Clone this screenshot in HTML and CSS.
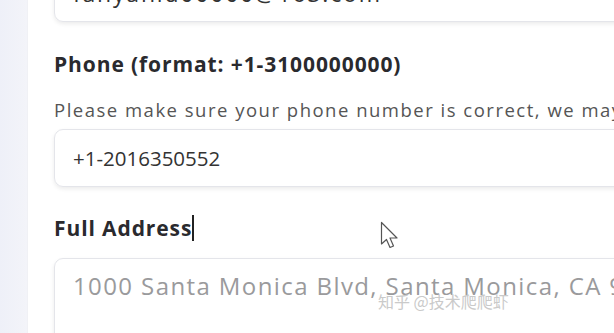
FILE: index.html
```html
<!DOCTYPE html>
<html>
<head>
<meta charset="utf-8">
<link rel="stylesheet" href="styles.css">
</head>
<body>
<div class="page">
  <div class="sidebar"></div>
  <main class="panel">
    <form class="form">
      <div class="input email">fanyanid00000@163.com</div>
      <div class="field">
        <label class="label">Phone (format: +1-3100000000)</label>
        <p class="help">Please make sure your phone number is correct, we may contact you</p>
        <div class="input">+1-2016350552</div>
      </div>
      <div class="field">
        <label class="label">Full Address<span class="caret"></span></label>
        <div class="input textarea placeholder">1000 Santa Monica Blvd, Santa Monica, CA 90401</div>
      </div>
    </form>
  </main>
</div>
<svg class="pointer" width="20" height="30" viewBox="0 0 20 30">
  <path d="M1.5 1.5 L1.5 23 L6.5 18.5 L10 26.5 L13.5 25 L10 17 L17 17 Z" fill="#fff" stroke="#555" stroke-width="1.2" stroke-linejoin="round"/>
</svg>
<div class="watermark">知乎 @技术爬爬虾</div>
</body>
</html>
```
FILE: styles.css
```css
html, body {
  margin: 0;
  padding: 0;
  width: 614px;
  height: 333px;
  overflow: hidden;
  background: #fff;
  font-family: "Open Sans", "Noto Sans", sans-serif;
}
.page {
  display: flex;
  height: 333px;
}
.sidebar {
  width: 27px;
  flex: none;
  background: linear-gradient(to right, #eef0f8, #f3f4f9);
  border-right: 1px solid #f0f1f5;
}
.panel {
  flex: 1;
  padding-left: 26px;
  overflow: hidden;
}
.form {
  margin-top: -36px;
  width: 820px;
}
.input {
  box-sizing: border-box;
  height: 58px;
  border: 1px solid #e4e5ea;
  border-radius: 9px;
  box-shadow: 0 2px 4px rgba(0,0,0,0.08);
  padding: 0 18px;
  display: flex;
  align-items: center;
  font-size: 20.5px;
  color: #333;
  white-space: nowrap;
}
.email {
  font-size: 23px;
  letter-spacing: 1.8px;
}
.field {
  display: flex;
  flex-direction: column;
}
.label {
  font-weight: 700;
  font-size: 21px;
  letter-spacing: 0.9px;
  color: #2a2a2e;
  margin-top: 30px;
  line-height: 24px;
  display: flex;
  align-items: center;
}
.caret {
  display: inline-block;
  width: 1.5px;
  height: 26px;
  background: #222;
  margin-left: 0;
}
.help {
  margin: 22px 0 7px;
  font-size: 18.5px;
  letter-spacing: 1.5px;
  color: #555;
  line-height: 24px;
  white-space: nowrap;
}
.field:last-child .label {
  margin-top: 28px;
  margin-bottom: 17px;
}
.textarea {
  height: 120px;
  align-items: flex-start;
  padding-top: 12px;
  font-size: 24px;
  line-height: 30px;
  letter-spacing: 1.4px;
}
.placeholder {
  color: #9a9a9c;
}
.pointer {
  position: absolute;
  left: 380px;
  top: 221px;
}
.watermark {
  position: absolute;
  left: 378px;
  top: 289px;
  font-family: "Noto Sans CJK SC", sans-serif;
  font-size: 16px;
  color: #cacaca;
  letter-spacing: 0;
}
```
